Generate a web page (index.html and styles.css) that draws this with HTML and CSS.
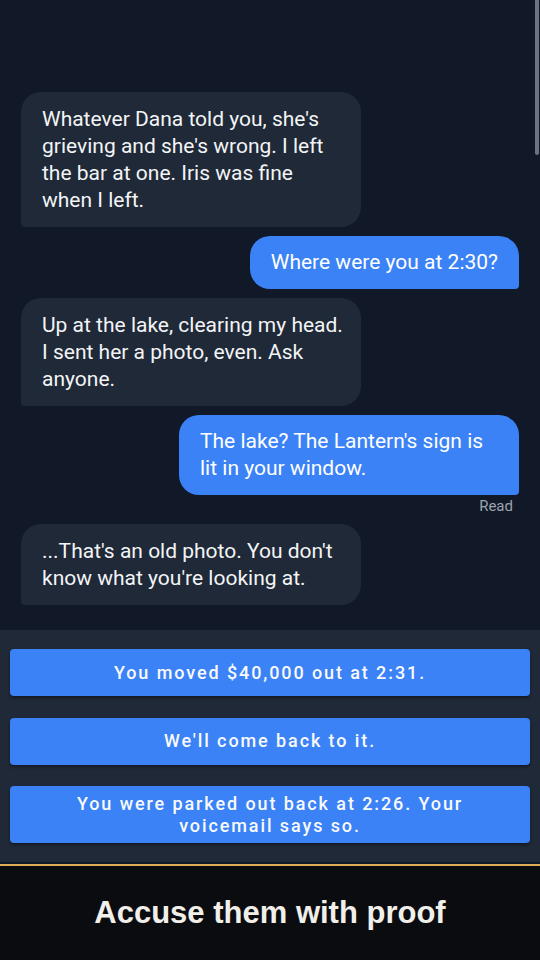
FILE: index.html
```html
<!DOCTYPE html>
<html lang="en">
<head>
<meta charset="utf-8">
<title>Chat</title>
<link rel="stylesheet" href="styles.css">
</head>
<body>
<div class="app">
  <main class="chat">
    <div class="bubble in">Whatever Dana told you, she's grieving and she's wrong. I left the bar at one. Iris was fine when I left.</div>
    <div class="bubble out">Where were you at 2:30?</div>
    <div class="bubble in">Up at the lake, clearing my head. I sent her a photo, even. Ask anyone.</div>
    <div class="out-group">
      <div class="bubble out">The lake? The Lantern's sign is lit in your window.</div>
      <div class="receipt">Read</div>
    </div>
    <div class="bubble in">...That's an old photo. You don't know what you're looking at.</div>
    <div class="scroll-thumb"></div>
  </main>
  <section class="choices">
    <button class="choice">You moved $40,000 out at 2:31.</button>
    <button class="choice">We'll come back to it.</button>
    <button class="choice">You were parked out back at 2:26. Your voicemail says so.</button>
  </section>
  <footer class="footer">
    <span class="footer-title">Accuse them with proof</span>
  </footer>
</div>
</body>
</html>
```

FILE: styles.css
```css
html, body {
  margin: 0;
  padding: 0;
  background: #111827;
}
.app {
  width: 540px;
  height: 960px;
  display: flex;
  flex-direction: column;
  overflow: hidden;
}
.chat {
  position: relative;
  flex: 1;
  display: flex;
  flex-direction: column;
  justify-content: flex-end;
  gap: 9px;
  padding: 0 21px 25px 21px;
  font-family: Roboto, "Noto Sans", sans-serif;
}
.bubble {
  box-sizing: border-box;
  max-width: 340px;
  padding: 13.5px 17px 13.5px 21px;
  font-size: 21px;
  line-height: 27px;
  color: #f3f4f6;
  border-radius: 20px;
}
.bubble.in {
  align-self: flex-start;
  background: #1f2937;
  border-bottom-left-radius: 4px;
}
.bubble.out {
  align-self: flex-end;
  background: #3b82f6;
  color: #ffffff;
  padding: 13px 21px;
  border-bottom-right-radius: 4px;
}
.out-group {
  display: flex;
  flex-direction: column;
  align-items: flex-end;
}
.receipt {
  margin-top: 2px;
  padding-right: 6px;
  font-size: 15px;
  line-height: 18px;
  color: #9ca3af;
}
.scroll-thumb {
  position: absolute;
  top: 0;
  right: 1px;
  width: 4px;
  height: 155px;
  background: #6b7280;
  border-radius: 0 0 2px 2px;
}
.choices {
  background: #1f2937;
  padding: 19px 10px 19px 10px;
  display: flex;
  flex-direction: column;
  gap: 21.5px;
}
.choice {
  box-sizing: border-box;
  min-height: 47px;
  padding: 6.5px 24px;
  border: none;
  border-radius: 4px;
  background: #3b82f6;
  color: #f8fafc;
  font-family: Roboto, "Noto Sans", sans-serif;
  font-weight: 500;
  font-size: 18px;
  line-height: 22px;
  letter-spacing: 1.9px;
  text-align: center;
  box-shadow: 0 2px 3px rgba(0, 0, 0, 0.35);
}
.footer {
  margin-top: 2px;
  border-top: 2px solid #e0ac5c;
  height: 94px;
  background: #0b0c10;
  display: flex;
  align-items: center;
  justify-content: center;
}
.footer-title {
  font-family: "Liberation Sans", Arial, sans-serif;
  font-weight: 700;
  font-size: 31px;
  color: #f1efe9;
}
```
